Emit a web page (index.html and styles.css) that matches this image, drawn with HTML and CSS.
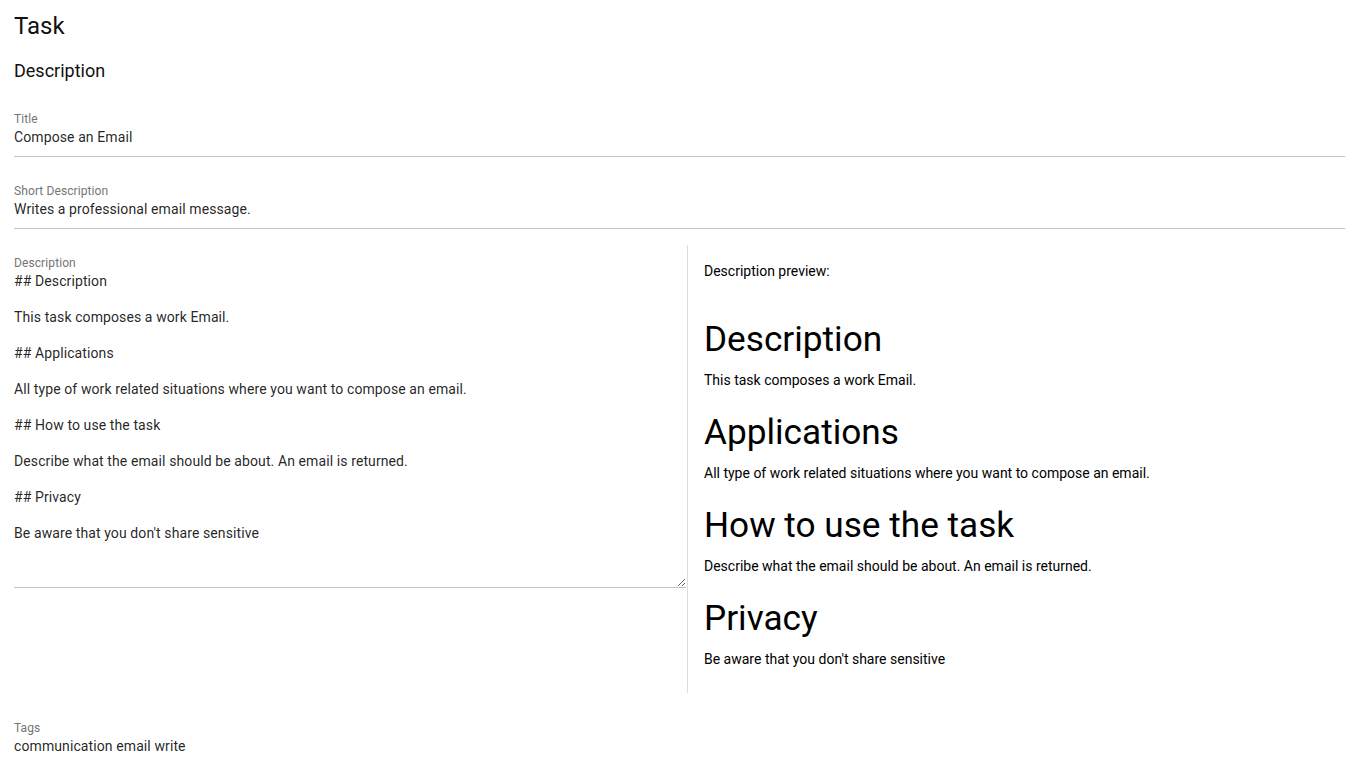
FILE: index.html
```html
<!DOCTYPE html>
<html>
<head>
<meta charset="utf-8">
<link rel="stylesheet" href="styles.css">
</head>
<body>
<div class="page">
  <h1 class="page-title">Task</h1>
  <h2 class="section-title">Description</h2>

  <div class="field">
    <div class="field-label">Title</div>
    <div class="field-value">Compose an Email</div>
  </div>

  <div class="field">
    <div class="field-label">Short Description</div>
    <div class="field-value">Writes a professional email message.</div>
  </div>

  <div class="desc-row">
    <div class="desc-edit">
      <div class="field-label">Description</div>
      <textarea class="desc-area">## Description

This task composes a work Email.

## Applications

All type of work related situations where you want to compose an email.

## How to use the task

Describe what the email should be about. An email is returned.

## Privacy

Be aware that you don't share sensitive</textarea>
    </div>
    <div class="desc-preview">
      <div class="preview-label">Description preview:</div>
      <div class="preview-body">
        <h1 class="md-h1">Description</h1>
        <p class="md-p">This task composes a work Email.</p>
        <h1 class="md-h1">Applications</h1>
        <p class="md-p">All type of work related situations where you want to compose an email.</p>
        <h1 class="md-h1">How to use the task</h1>
        <p class="md-p">Describe what the email should be about. An email is returned.</p>
        <h1 class="md-h1">Privacy</h1>
        <p class="md-p">Be aware that you don't share sensitive</p>
      </div>
    </div>
  </div>

  <div class="field tags">
    <div class="field-label">Tags</div>
    <div class="field-value">communication email write</div>
  </div>
</div>
</body>
</html>
```

FILE: styles.css
```css
* { box-sizing: border-box; }
html, body { margin: 0; padding: 0; background: #fff; }
body {
  font-family: Roboto, "Liberation Sans", sans-serif;
  color: #111;
  overflow: hidden;
}
.page {
  padding-left: 14px;
}
.page-title {
  margin: 10px 0 0 0;
  font-size: 24px;
  font-weight: 400;
  line-height: 32px;
  color: #111;
}
.section-title {
  margin: 17px 0 0 0;
  font-size: 18px;
  font-weight: 400;
  line-height: 24px;
  color: #111;
}
.field {
  margin-top: 26px;
  border-bottom: 1px solid #c2c2c2;
  padding-bottom: 9px;
}
.section-title + .field { margin-top: 28px; }
.field-label {
  font-size: 12px;
  line-height: 16px;
  color: #757575;
  letter-spacing: 0.1px;
}
.field-value {
  font-size: 14px;
  line-height: 20px;
  color: rgba(0, 0, 0, 0.87);
  letter-spacing: 0.1px;
}
.desc-row {
  margin-top: 16px;
  display: grid;
  grid-template-columns: 674px 1fr;
}
.desc-edit {
  padding-top: 10px;
  border-right: 1px solid #dcdcdc;
  padding-right: 1px;
}
.desc-area {
  display: block;
  width: 100%;
  height: 317px;
  margin: 0;
  padding: 1px 0 0 0;
  border: none;
  border-bottom: 1px solid #c2c2c2;
  font-family: Roboto, "Liberation Sans", sans-serif;
  font-size: 14px;
  line-height: 18px;
  letter-spacing: 0.1px;
  color: rgba(0, 0, 0, 0.87);
  background: transparent;
  outline: none;
  resize: vertical;
  overflow: hidden;
}
.desc-preview {
  padding: 16px 0 24px 16px;
  color: #000;
}
.preview-label {
  font-size: 14px;
  line-height: 20px;
}
.preview-body { padding-top: 37px; }
.md-h1 {
  margin: 0 0 10px 0;
  font-size: 35.2px;
  font-weight: 400;
  line-height: 42px;
}
.md-p {
  margin: 0 0 21px 0;
  font-size: 14px;
  line-height: 20px;
}
.md-p:last-child { margin-bottom: 0; }
.tags {
  margin-top: 27px;
  border-bottom: none;
}
```
